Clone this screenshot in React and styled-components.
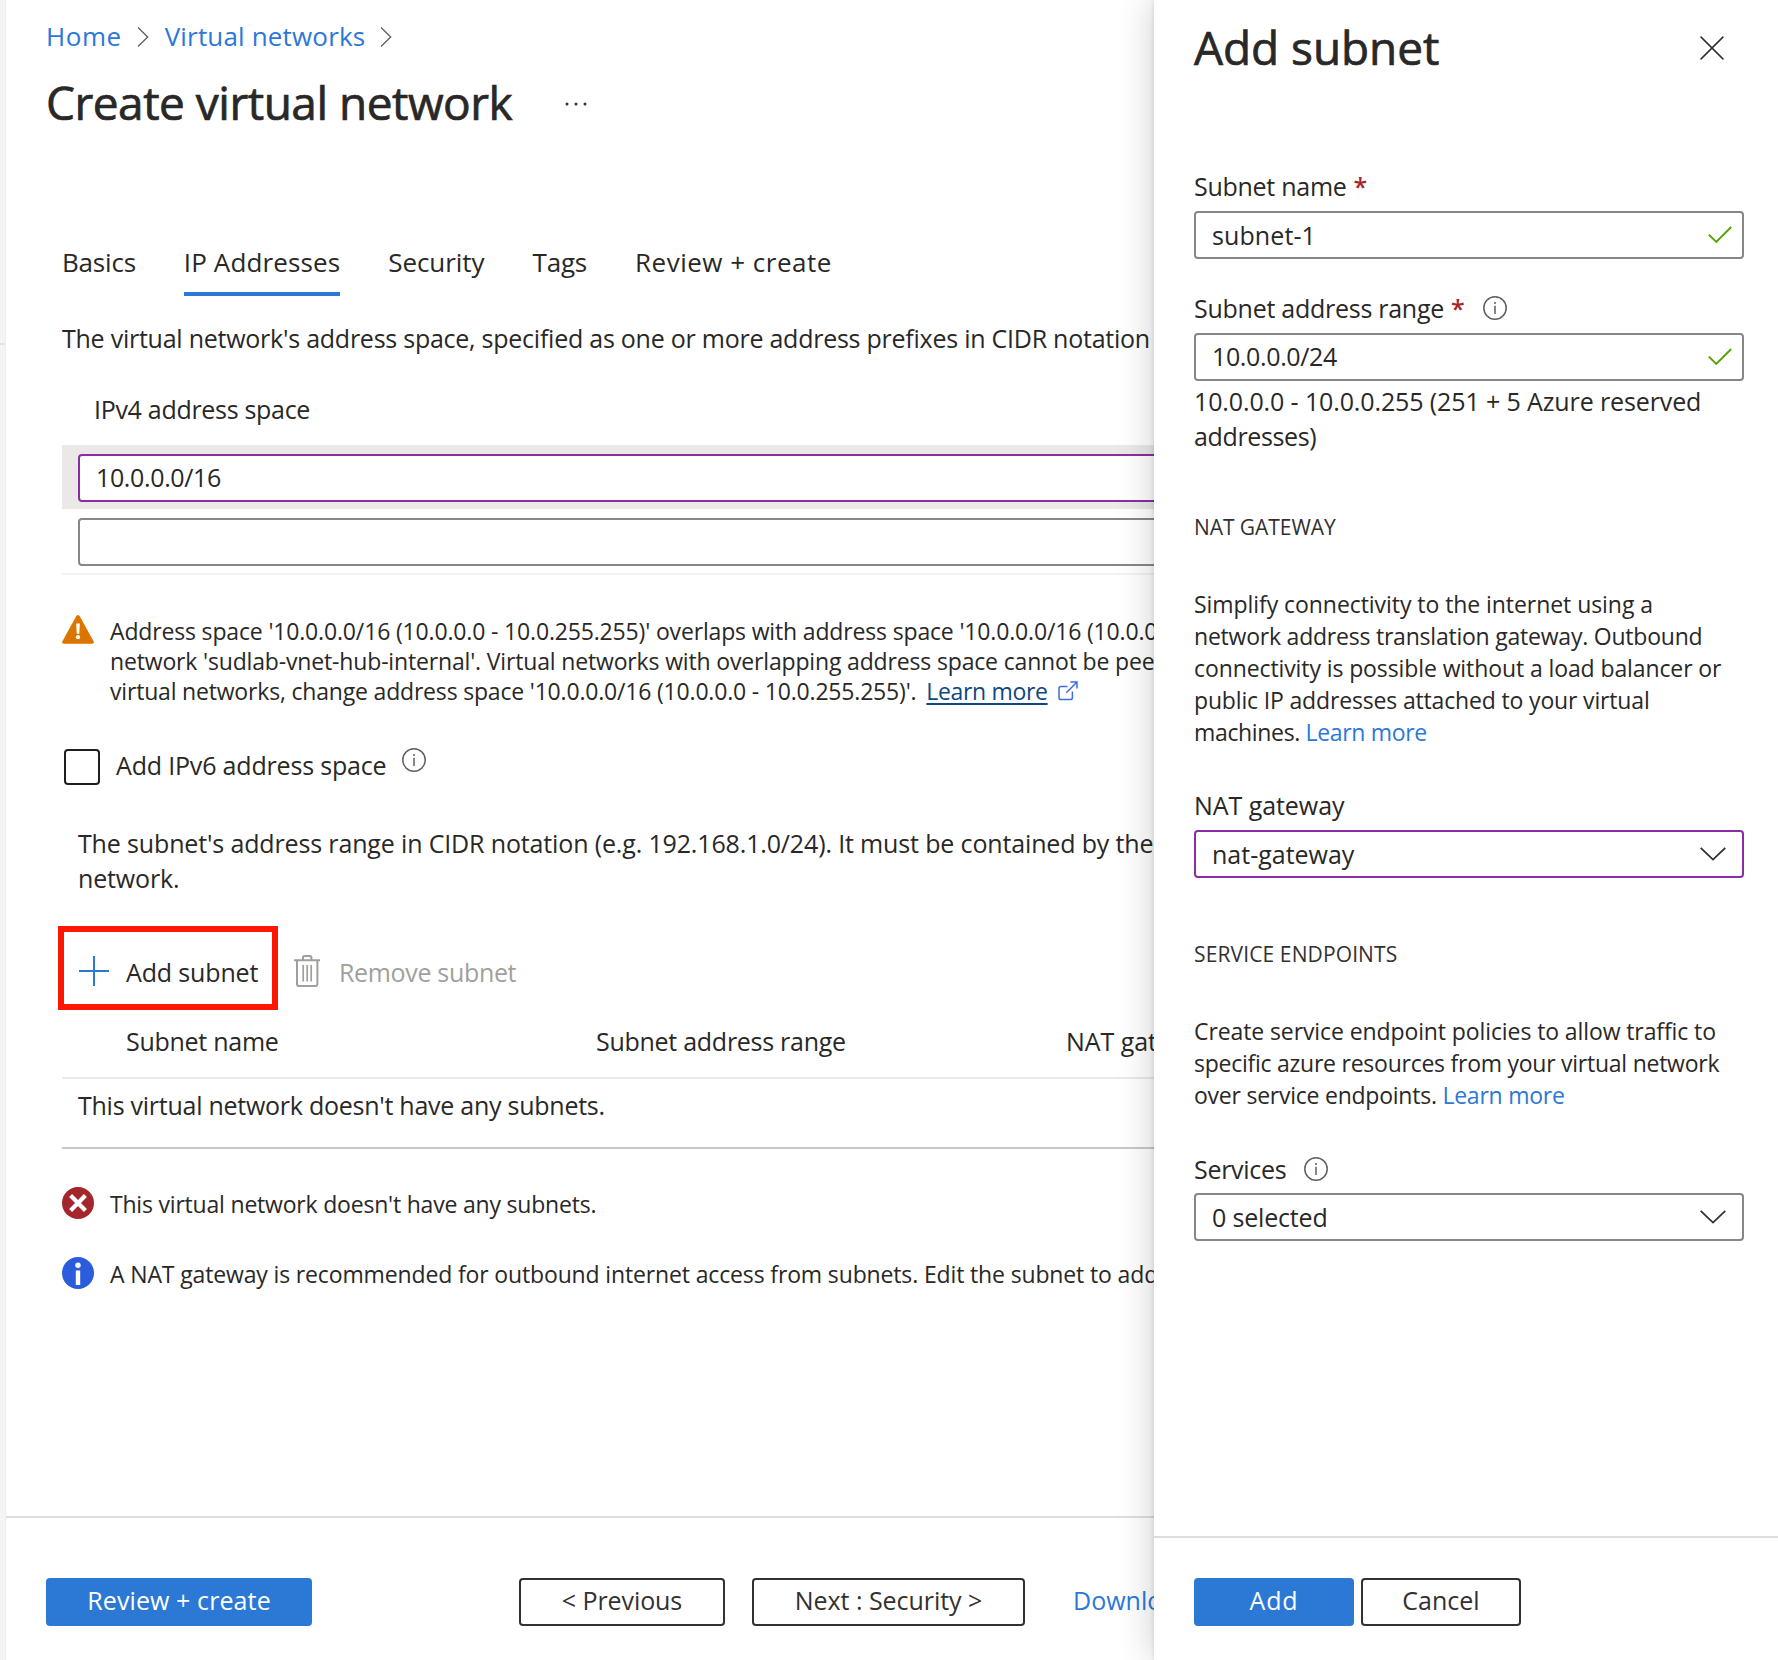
import React from "react";
import styled, { createGlobalStyle } from "styled-components";

const color = {
  text: "#292827",
  link: "#2b78d8",
  primary: "#2c78d5",
  border: "#888786",
  changed: "#8a2da5",
  danger: "#a4262c",
  muted: "#a19f9d",
  rule: "#dedede",
};

const GlobalStyle = createGlobalStyle`
  * { box-sizing: border-box; }
  body {
    margin: 0;
    background: #fff;
    color: ${color.text};
    font-family: "Open Sans", "Noto Sans", sans-serif;
    font-size: 25px;
    line-height: 36px;
    overflow: hidden;
  }
`;

/* Keeps the tracking of a run of text adjustable without a class per string. */
const Text = styled.span`
  letter-spacing: ${(p) => p.$track || 0}px;
  white-space: nowrap;
`;

const Shell = styled.div`
  display: flex;
  height: 1660px;
  overflow: hidden;
`;

const Rail = styled.div`
  width: 6px;
  flex: none;
  background: #f4f4f4;
  border-right: 1px solid #eeeeee;
`;

const RailDivider = styled.div`
  height: 345px;
  border-bottom: 2px solid #e3e3e3;
`;

const Main = styled.main`
  flex: 1;
  min-width: 0;
  display: flex;
  flex-direction: column;
  overflow: hidden;
`;

const PageHeader = styled.header`
  padding: 18px 0 0 40px;
`;

const Breadcrumb = styled.nav`
  display: flex;
  align-items: center;
  height: 36px;
  font-size: 26px;
  color: ${color.link};
  svg { margin: 2px 16px 0 15px; }
`;

const TitleRow = styled.div`
  display: flex;
  align-items: center;
  margin-top: 18px;
`;

const Title = styled.h1`
  margin: 0;
  font-size: 46px;
  line-height: 60px;
  font-weight: 400;
  letter-spacing: ${(p) => p.$track}px;
  -webkit-text-stroke: 0.7px ${color.text};
  white-space: nowrap;
`;

const MoreButton = styled.span`
  display: flex;
  margin: 4px 0 0 52px;
`;

const Content = styled.section`
  flex: 1;
  min-height: 0;
  margin-right: -24px;
  padding: 112px 0 0 56px;
`;

const Tabs = styled.div`
  display: flex;
  gap: 48px;
  font-size: 26px;
`;

const Tab = styled.div`
  height: 52px;
  white-space: nowrap;
  letter-spacing: ${(p) => p.$track || 0}px;
  border-bottom: 4px solid ${(p) => (p.$active ? color.primary : "transparent")};
`;

const Paragraph = styled.p`
  margin: ${(p) => p.$top}px 0 0;
  padding-left: ${(p) => p.$indent || 0}px;
  line-height: 35px;
  letter-spacing: ${(p) => p.$track || 0}px;
  white-space: nowrap;
`;

const GridHeading = styled.div`
  margin-top: 35px;
  padding: 0 0 18px 32px;
`;

const AddressRow = styled.div`
  padding: 9px 0 7px 16px;
  background: ${(p) => (p.$active ? "#ebe9e8" : "#fff")};
  border-bottom: ${(p) => (p.$last ? "2px solid #f2f2f2" : "0")};
`;

const Field = styled.div`
  display: flex;
  align-items: center;
  justify-content: space-between;
  height: 48px;
  padding: 0 ${(p) => p.$right || 10}px 0 16px;
  border: 2px solid ${(p) => (p.$changed ? color.changed : color.border)};
  border-radius: 4px;
  background: #fff;
  span { padding-bottom: ${(p) => p.$lift || 0}px; }
`;

const Notice = styled.div`
  display: flex;
  gap: 16px;
  margin-top: ${(p) => p.$top}px;
  font-size: 23px;
  line-height: 30px;
  svg { flex: none; }
`;

const NoticeText = styled.div`
  margin-top: ${(p) => p.$drop}px;
  white-space: nowrap;
  letter-spacing: ${(p) => p.$track}px;
`;

const NoticeLine = styled.div`
  display: flex;
  align-items: center;
  letter-spacing: ${(p) => p.$track}px;
`;

const NoticeLink = styled.span`
  margin: 0 10px 0 10px;
  color: #0f4880;
  letter-spacing: -0.34px;
  text-decoration: underline;
  text-decoration-thickness: 2px;
  text-underline-offset: 3px;
`;

const CheckRow = styled.div`
  display: flex;
  align-items: flex-start;
  margin-top: 43px;
  padding-left: 2px;
`;

const Checkbox = styled.span`
  width: 36px;
  height: 36px;
  margin-right: 16px;
  border: 2px solid #201f1e;
  border-radius: 4px;
`;

const CheckLabel = styled(Text)`
  height: 36px;
  line-height: 32px;
  margin-right: 16px;
  & + svg { margin-top: -1px; }
`;

const Toolbar = styled.div`
  display: flex;
  align-items: center;
  margin: 30px 0 0 -4px;
`;

const HighlightedCommand = styled.div`
  display: flex;
  align-items: center;
  gap: 17px;
  width: 220px;
  height: 84px;
  padding: 6px 0 0 15px;
  border: 6px solid #fb1906;
  span { padding-top: 2px; }
`;

const Command = styled.div`
  display: flex;
  align-items: center;
  gap: 19px;
  height: 84px;
  padding: 6px 0 0 16px;
  color: ${color.muted};
  span { padding-top: 2px; }
`;

const TableHead = styled.div`
  display: grid;
  grid-template-columns: 470px 470px 300px;
  margin-top: 13px;
  padding: 0 0 18px 64px;
  border-bottom: 2px solid #eaeaea;
`;

const TableEmpty = styled.div`
  padding: 8px 0 24px 16px;
  border-bottom: 2px solid #c8c8c8;
`;

const Footer = styled.footer`
  display: flex;
  flex: none;
  height: ${(p) => p.$height}px;
  padding: ${(p) => p.$height - 84}px 0 0 40px;
  border-top: 2px solid ${color.rule};
`;

const Button = styled.button`
  width: ${(p) => p.$width}px;
  height: 48px;
  flex: none;
  margin: 0 0 0 ${(p) => p.$left || 0}px;
  padding: 0 0 4px;
  border: 2px solid ${(p) => (p.$primary ? color.primary : "#323130")};
  border-radius: 4px;
  background: ${(p) => (p.$primary ? color.primary : "#fff")};
  color: ${(p) => (p.$primary ? "#fff" : "#323130")};
  font: inherit;
  line-height: 40px;
  letter-spacing: ${(p) => p.$track || 0}px;
  white-space: nowrap;
`;

const FooterLink = styled.span`
  margin-left: 48px;
  line-height: 44px;
  color: ${color.link};
  white-space: nowrap;
`;

const Panel = styled.aside`
  position: relative;
  z-index: 1;
  flex: none;
  display: flex;
  flex-direction: column;
  width: 624px;
  background: #fff;
  box-shadow: 0 0 36px rgba(0, 0, 0, 0.2), 0 0 5px rgba(0, 0, 0, 0.12);
`;

const PanelHeader = styled.div`
  display: flex;
  align-items: center;
  justify-content: space-between;
  padding: 17px 54px 0 40px;
  svg { margin-top: 2px; }
`;

const PanelBody = styled.div`
  flex: 1;
  padding: 91px 34px 0 40px;
`;

const Label = styled.div`
  display: flex;
  align-items: center;
  height: 36px;
  margin: ${(p) => p.$top || 0}px 0 ${(p) => p.$bottom || 7}px;
  svg { margin-left: ${(p) => p.$iconGap || 18}px; }
`;

const Required = styled.span`
  margin-left: 7px;
  color: ${color.danger};
  font-weight: 600;
`;

const Help = styled.div`
  margin-top: 3px;
  line-height: 35px;
`;

const SectionTitle = styled.div`
  margin-top: ${(p) => p.$top}px;
  font-size: 21px;
  line-height: 30px;
  letter-spacing: ${(p) => p.$track || 0}px;
  color: #323130;
`;

const Description = styled.div`
  margin-top: 46px;
  font-size: 23px;
  line-height: 32px;
`;

const InlineLink = styled.span`
  color: ${color.link};
`;

const ChevronRight = () => (
  <svg width="12" height="20" viewBox="0 0 12 20" fill="none" stroke="#605e5c" strokeWidth="1.3">
    <path d="M1 0.5 10.7 10 1 19.5" />
  </svg>
);

const ChevronDown = () => (
  <svg width="26" height="14" viewBox="0 0 26 14" fill="none" stroke="#323130" strokeWidth="1.8">
    <path d="M0.7 0.8 13 12.6 25.3 0.8" />
  </svg>
);

const Check = () => (
  <svg width="24" height="18" viewBox="0 0 24 18" fill="none" stroke="#57a300" strokeWidth="2">
    <path d="M0.8 8.6 8.3 15.9 23.2 1" />
  </svg>
);

const Close = () => (
  <svg width="24" height="24" viewBox="0 0 24 24" fill="none" stroke="#323130" strokeWidth="1.5">
    <path d="M0.6 0.6 23.4 23.4M23.4 0.6 0.6 23.4" />
  </svg>
);

const Dots = () => (
  <svg width="24" height="4" viewBox="0 0 24 4" fill="#323130">
    <circle cx="3" cy="2" r="1.5" />
    <circle cx="12" cy="2" r="1.5" />
    <circle cx="21" cy="2" r="1.5" />
  </svg>
);

const Info = () => (
  <svg width="24" height="24" viewBox="0 0 24 24" fill="none" stroke="#605e5c" strokeWidth="1.5">
    <circle cx="12" cy="12" r="11.2" />
    <path d="M12 9.8V18" />
    <circle cx="12" cy="7" r="1" fill="#605e5c" stroke="none" />
  </svg>
);

const Warning = () => (
  <svg width="32" height="29" viewBox="0 0 32 29">
    <path d="M14.2 1.2Q16-1.2 17.8 1.2L31.7 26.4Q32.4 28.7 30 28.8H2Q-0.4 28.7 0.3 26.4Z" fill="#db7500" />
    <path d="M14.2 8.5h3.6l-.5 10.2h-2.6Z" fill="#fff" />
    <circle cx="16" cy="22.2" r="2.1" fill="#fff" />
  </svg>
);

const ErrorBadge = () => (
  <svg width="32" height="32" viewBox="0 0 32 32">
    <circle cx="16" cy="16" r="16" fill="#a4262c" />
    <path d="M8.6 8.6 23.4 23.4M23.4 8.6 8.6 23.4" stroke="#fff" strokeWidth="4.2" />
  </svg>
);

const InfoBadge = () => (
  <svg width="32" height="32" viewBox="0 0 32 32">
    <circle cx="16" cy="16" r="16" fill="#2b5cdb" />
    <circle cx="16" cy="8.2" r="2.7" fill="#fff" />
    <rect x="13.8" y="13.5" width="4.4" height="14.5" fill="#fff" />
  </svg>
);

const External = () => (
  <svg width="20" height="20" viewBox="0 0 20 20" fill="none" stroke="#3b6fe0" strokeWidth="1.5">
    <path d="M9.5 5.5H3Q1 5.5 1 7.5V16.5Q1 18.6 3 18.6H12.4Q14.4 18.6 14.4 16.5V10.5" />
    <path d="M8.3 11.7 18.8 1.2M12.4 1H19V7.6" />
  </svg>
);

const Plus = () => (
  <svg width="30" height="30" viewBox="0 0 30 30" stroke="#2c78d5" strokeWidth="2">
    <path d="M15 0V30M0 15H30" />
  </svg>
);

const Trash = () => (
  <svg width="26" height="32" viewBox="0 0 26 32" fill="none" stroke={color.muted} strokeWidth="2">
    <path d="M0 5.2H26M9 5V2.6Q9 1 10.6 1H15.8Q17.4 1 17.4 2.6V5" />
    <path d="M3 5V29Q3 31 5 31H21.4Q23.4 31 23.4 29V5" />
    <path d="M9.2 10V26.5M13.2 10V26.5M17.2 10V26.5" strokeWidth="1.7" />
  </svg>
);

const tabs = [
  { name: "Basics", track: -0.2 },
  { name: "IP Addresses", active: true, track: 0.12 },
  { name: "Security", track: -0.05 },
  { name: "Tags", track: -0.2 },
  { name: "Review + create", track: 0.5 },
];

export default function App() {
  return (
    <>
      <GlobalStyle />
      <Shell>
        <Rail>
          <RailDivider />
        </Rail>
        <Main>
          <PageHeader>
            <Breadcrumb>
              <Text $track={0.55}>Home</Text>
              <ChevronRight />
              <Text $track={0.17}>Virtual networks</Text>
              <ChevronRight />
            </Breadcrumb>
            <TitleRow>
              <Title $track={-0.5}>Create virtual network</Title>
              <MoreButton>
                <Dots />
              </MoreButton>
            </TitleRow>
          </PageHeader>

          <Content>
            <Tabs>
              {tabs.map((t) => (
                <Tab key={t.name} $active={t.active} $track={t.track}>
                  {t.name}
                </Tab>
              ))}
            </Tabs>

            <Paragraph $top={25} $track={-0.245}>
              The virtual network's address space, specified as one or more address prefixes in CIDR notation
            </Paragraph>

            <GridHeading>
              <Text $track={-0.3}>IPv4 address space</Text>
            </GridHeading>
            <AddressRow $active>
              <Field $changed $lift={2}>
                <Text $track={-0.36}>10.0.0.0/16</Text>
              </Field>
            </AddressRow>
            <AddressRow $last>
              <Field />
            </AddressRow>

            <Notice $top={40}>
              <Warning />
              <NoticeText $drop={1}>
                <NoticeLine $track={-0.16}>
                  Address space '10.0.0.0/16 (10.0.0.0 - 10.0.255.255)' overlaps with address space '10.0.0.0/16 (10.0.0.
                </NoticeLine>
                <NoticeLine $track={-0.16}>
                  network 'sudlab-vnet-hub-internal'. Virtual networks with overlapping address space cannot be peer
                </NoticeLine>
                <NoticeLine $track={-0.186}>
                  virtual networks, change address space '10.0.0.0/16 (10.0.0.0 - 10.0.255.255)'.
                  <NoticeLink>Learn more</NoticeLink>
                  <External />
                </NoticeLine>
              </NoticeText>
            </Notice>

            <CheckRow>
              <Checkbox />
              <CheckLabel $track={-0.18}>Add IPv6 address space</CheckLabel>
              <Info />
            </CheckRow>

            <Paragraph $top={41} $indent={16} $track={-0.147}>
              The subnet's address range in CIDR notation (e.g. 192.168.1.0/24). It must be contained by the
              <br />
              network.
            </Paragraph>

            <Toolbar>
              <HighlightedCommand>
                <Plus />
                <Text $track={-0.15}>Add subnet</Text>
              </HighlightedCommand>
              <Command>
                <Trash />
                <Text $track={-0.33}>Remove subnet</Text>
              </Command>
            </Toolbar>

            <TableHead>
              <Text $track={-0.27}>Subnet name</Text>
              <Text $track={-0.27}>Subnet address range</Text>
              <Text $track={-0.06}>NAT gatew</Text>
            </TableHead>
            <TableEmpty>
              <Text $track={-0.257}>This virtual network doesn't have any subnets.</Text>
            </TableEmpty>

            <Notice $top={38}>
              <ErrorBadge />
              <NoticeText $drop={2} $track={-0.2}>
                This virtual network doesn't have any subnets.
              </NoticeText>
            </Notice>
            <Notice $top={38}>
              <InfoBadge />
              <NoticeText $drop={2} $track={-0.142}>
                A NAT gateway is recommended for outbound internet access from subnets. Edit the subnet to add
              </NoticeText>
            </Notice>
          </Content>

          <Footer $height={144}>
            <Button $primary $width={266} $track={0.1}>
              Review + create
            </Button>
            <Button $width={206} $left={207} $track={-0.08}>
              &lt; Previous
            </Button>
            <Button $width={273} $left={27} $track={-0.05}>
              Next : Security &gt;
            </Button>
            <FooterLink>Download</FooterLink>
          </Footer>
        </Main>

        <Panel>
          <PanelHeader>
            <Title as="h2" $track={-0.07}>
              Add subnet
            </Title>
            <Close />
          </PanelHeader>

          <PanelBody>
            <Label>
              <Text $track={-0.27}>Subnet name</Text>
              <Required>*</Required>
            </Label>
            <Field $lift={1}>
              <Text $track={0.1}>subnet-1</Text>
              <Check />
            </Field>

            <Label $top={31}>
              <Text $track={-0.26}>Subnet address range</Text>
              <Required>*</Required>
              <Info />
            </Label>
            <Field $lift={3}>
              <Text $track={-0.36}>10.0.0.0/24</Text>
              <Check />
            </Field>
            <Help>
              <Text $track={-0.12}>10.0.0.0 - 10.0.0.255 (251 + 5 Azure reserved</Text>
              <br />
              <Text $track={-0.35}>addresses)</Text>
            </Help>

            <SectionTitle $top={58} $track={-0.06}>NAT GATEWAY</SectionTitle>
            <Description>
              <Text $track={-0.06}>Simplify connectivity to the internet using a</Text>
              <br />
              <Text $track={-0.22}>network address translation gateway. Outbound</Text>
              <br />
              <Text $track={-0.1}>connectivity is possible without a load balancer or</Text>
              <br />
              <Text $track={-0.16}>public IP addresses attached to your virtual</Text>
              <br />
              <Text $track={-0.34}>
                machines. <InlineLink>Learn more</InlineLink>
              </Text>
            </Description>

            <Label $top={39}>
              <Text $track={-0.06}>NAT gateway</Text>
            </Label>
            <Field $changed $right={16}>
              <Text>nat-gateway</Text>
              <ChevronDown />
            </Field>

            <SectionTitle $top={61} $track={0.12}>
              SERVICE ENDPOINTS
            </SectionTitle>
            <Description>
              <Text $track={-0.1}>Create service endpoint policies to allow traffic to</Text>
              <br />
              <Text $track={-0.25}>specific azure resources from your virtual network</Text>
              <br />
              <Text $track={-0.24}>
                over service endpoints. <InlineLink>Learn more</InlineLink>
              </Text>
            </Description>

            <Label $top={40} $bottom={6}>
              <Text $track={-0.3}>Services</Text>
              <Info />
            </Label>
            <Field $right={16}>
              <Text $track={-0.17}>0 selected</Text>
              <ChevronDown />
            </Field>
          </PanelBody>

          <Footer $height={124}>
            <Button $primary $width={160} $track={0.8}>
              Add
            </Button>
            <Button $width={160} $left={7}>
              Cancel
            </Button>
          </Footer>
        </Panel>
      </Shell>
    </>
  );
}
